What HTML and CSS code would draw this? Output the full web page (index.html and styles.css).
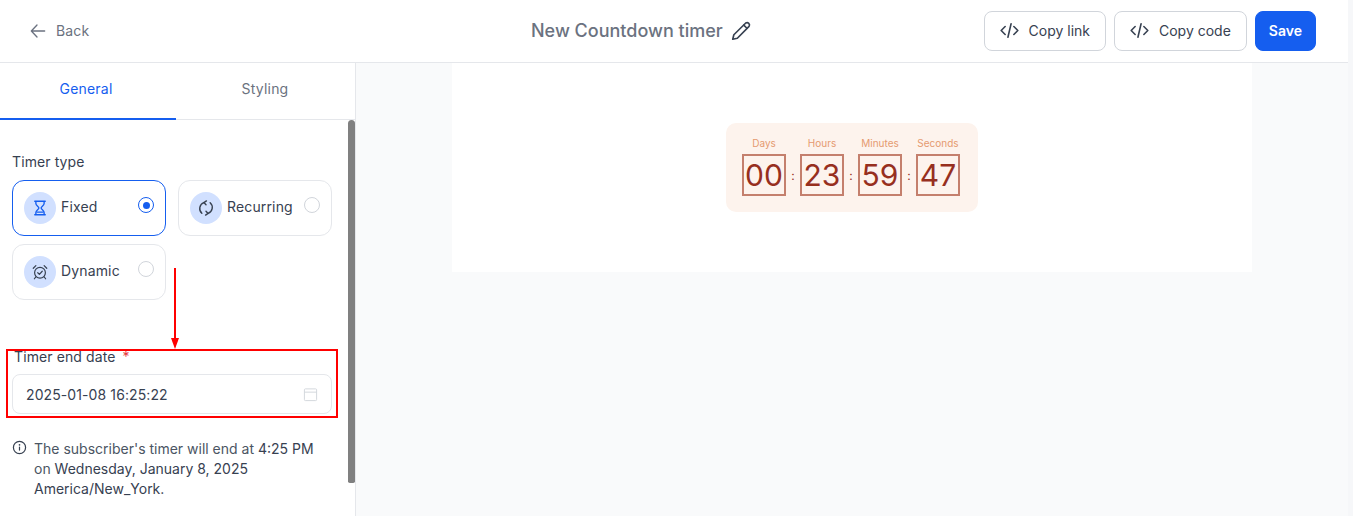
FILE: index.html
```html
<!DOCTYPE html>
<html lang="en">
<head>
  <meta charset="UTF-8" />
  <title>New Countdown timer</title>
  <link rel="stylesheet" href="styles.css">
</head>

<body>
  <div class="app">
    <header class="topbar">
      <a class="back">
        <svg class="back-icon" viewBox="0 0 24 24" fill="none" stroke="currentColor" stroke-width="2" stroke-linecap="round" stroke-linejoin="round"><path d="M10.5 21 2 12l8.500-9M2 12h20"/></svg>
        <span>Back</span>
      </a>
      <div class="title">
        <span>New Countdown timer</span>
        <svg class="pencil" viewBox="0 0 24 24" fill="none" stroke="currentColor" stroke-width="1.8" stroke-linecap="round" stroke-linejoin="round"><path d="M17.200 3.300a2.600 2.600 0 0 1 3.600 3.600L8 19.900 3 21l1.200-4.900z"/><path d="m15 5.500 3.500 3.500"/></svg>
      </div>
      <div class="actions">
        <button class="btn">
          <svg class="code-icon" viewBox="0 0 24 24" fill="none" stroke="currentColor" stroke-width="2" stroke-linecap="round" stroke-linejoin="round"><path d="M6.500 7 1.500 12l5 5M17.500 7l5 5-5 5M14 3.500 10 20.500"/></svg>
          Copy link
        </button>
        <button class="btn">
          <svg class="code-icon" viewBox="0 0 24 24" fill="none" stroke="currentColor" stroke-width="2" stroke-linecap="round" stroke-linejoin="round"><path d="M6.500 7 1.500 12l5 5M17.500 7l5 5-5 5M14 3.500 10 20.500"/></svg>
          Copy code
        </button>
        <button class="btn btn-primary">Save</button>
      </div>
    </header>

    <div class="main">
      <aside class="sidebar">
        <div class="tabs">
          <div class="tab active">General</div>
          <div class="tab">Styling</div>
        </div>

        <div class="panel">
          <div class="field-label">Timer type</div>
          <div class="type-grid">
            <div class="type-card selected">
              <span class="type-icon blue">
                <svg viewBox="0 0 24 24" fill="none" stroke="currentColor" stroke-width="1.800" stroke-linecap="round" stroke-linejoin="round"><path d="M5 3h14M5 21h14M6.500 3v3c0 3 4 4 4 6s-4 3-4 6v3M17.500 3v3c0 3-4 4-4 6s4 3 4 6v3M8.500 17.500h7"/></svg>
              </span>
              <span class="type-name">Fixed</span>
              <span class="radio on"></span>
            </div>
            <div class="type-card">
              <span class="type-icon">
                <svg class="icon-large" viewBox="0 0 24 24" fill="none" stroke="currentColor" stroke-width="1.700" stroke-linecap="round" stroke-linejoin="round"><path d="M9.500 5.500A7.500 7.500 0 0 0 7 18.200M14.500 18.500A7.500 7.500 0 0 0 17 5.800"/><path d="m12.500 3.500-3 2 2.500 2.500M11.500 20.500l3-2-2.500-2.500"/></svg>
              </span>
              <span class="type-name">Recurring</span>
              <span class="radio"></span>
            </div>
            <div class="type-card">
              <span class="type-icon">
                <svg viewBox="0 0 24 24" fill="none" stroke="currentColor" stroke-width="1.600" stroke-linecap="round" stroke-linejoin="round"><circle cx="12" cy="13" r="7.200"/><path d="m9 13 2.200 2.200L15 11M3 7l3.500-3.500M21 7l-3.500-3.500M6.500 18.500 4.500 21M17.500 18.500l2 2.500"/></svg>
              </span>
              <span class="type-name">Dynamic</span>
              <span class="radio"></span>
            </div>
          </div>

          <div class="field-label end-label">Timer end date <span class="req">*</span></div>
          <div class="date-input">
            <span>2025-01-08 16:25:22</span>
            <svg class="cal-icon" viewBox="0 0 16 16" fill="none" stroke="currentColor" stroke-width="1"><rect x="1.500" y="2" width="13" height="12.500" rx="1"/><path d="M1.500 5.500h13"/></svg>
          </div>

          <div class="note">
            <svg class="info-icon" viewBox="0 0 16 16" fill="none" stroke="currentColor" stroke-width="1.300" stroke-linecap="round"><circle cx="8" cy="8" r="6.500"/><path d="M8 7.500v3.200"/><path d="M8 5.100v.1" stroke-width="1.700"/></svg>
            <p>The subscriber's timer will end at <b>4:25 PM</b> on <b>Wednesday, January 8, 2025</b> <b>America/New_York.</b></p>
          </div>
        </div>

        <div class="scroll-thumb"></div>
      </aside>

      <section class="canvas">
        <div class="sheet">
          <div class="timer">
            <div class="unit">
              <div class="unit-label">Days</div>
              <div class="digits">00</div>
            </div>
            <div class="sep">:</div>
            <div class="unit">
              <div class="unit-label">Hours</div>
              <div class="digits">23</div>
            </div>
            <div class="sep">:</div>
            <div class="unit">
              <div class="unit-label">Minutes</div>
              <div class="digits">59</div>
            </div>
            <div class="sep">:</div>
            <div class="unit">
              <div class="unit-label">Seconds</div>
              <div class="digits">47</div>
            </div>
          </div>
        </div>
      </section>
    </div>
  </div>

  <!-- annotation drawn over the screenshot -->
  <div class="mark-line"></div>
  <div class="mark-head"></div>
  <div class="mark-box"></div>
</body>
</html>
```

FILE: styles.css
```css
* {
  box-sizing: border-box;
}

html, body {
  height: 100%;
}

body {
  margin: 0;
  font-family: Inter, "Noto Sans", sans-serif;
  background: #f6f7f9;
  color: #374151;
  overflow: hidden;
}

.app {
  width: 1348px;
  height: 516px;
  display: flex;
  flex-direction: column;
  background: #fff;
}

.topbar {
  flex: 0 0 63px;
  display: flex;
  align-items: center;
  justify-content: space-between;
  padding: 0 32px 1px 30px;
  border-bottom: 1px solid #e5e7eb;
  background: #fff;
  position: relative;
}

.back {
  display: flex;
  align-items: center;
  gap: 10px;
  font-size: 14px;
  letter-spacing: 0.15px;
  color: #6b7280;
}

.back-icon {
  width: 16px;
  height: 16px;
}

.title {
  position: absolute;
  left: 531px;
  top: 0;
  height: 61px;
  display: flex;
  align-items: center;
  gap: 7px;
  font-size: 18px;
  font-weight: 500;
  color: #6b7280;
}

.pencil {
  width: 22px;
  height: 22px;
  color: #374151;
}

.actions {
  display: flex;
  gap: 8px;
}

.btn {
  height: 40px;
  padding: 0 15px;
  display: flex;
  align-items: center;
  gap: 10px;
  background: #fff;
  border: 1px solid #d1d5db;
  border-radius: 8px;
  font-family: inherit;
  font-size: 14px;
  font-weight: 400;
  color: #374151;
}

.btn-primary {
  background: #155eef;
  border-color: #155eef;
  color: #fff;
  font-weight: 600;
  padding: 0 13px;
}

.code-icon {
  width: 19px;
  height: 19px;
}

.main {
  flex: 1;
  display: flex;
  min-height: 0;
}

.sidebar {
  flex: 0 0 356px;
  border-right: 1px solid #e5e7eb;
  background: #fff;
  position: relative;
  overflow: hidden;
}

.tabs {
  display: flex;
  height: 57px;
  border-bottom: 1px solid #e5e7eb;
}

.tab {
  flex: 0 0 176px;
  height: 57px;
  display: flex;
  align-items: center;
  justify-content: center;
  padding-bottom: 6px;
  font-size: 14px;
  font-weight: 400;
  letter-spacing: 0.2px;
  color: #6b7280;
}

.tab + .tab {
  flex: 0 0 178px;
}

.tab.active {
  color: #155eef;
  border-bottom: 2px solid #155eef;
  padding: 0 4px 4px 0;
}

.panel {
  padding: 33px 23px 0 12px;
}

.field-label {
  font-size: 14px;
  font-weight: 400;
  letter-spacing: 0.1px;
  line-height: 17px;
  color: #374151;
}

.type-grid {
  display: grid;
  grid-template-columns: 154px 154px;
  gap: 8px 12px;
  margin-top: 10px;
}

.type-card {
  height: 56px;
  display: flex;
  align-items: center;
  padding: 0 11px;
  border: 1px solid #e5e7eb;
  border-radius: 12px;
  position: relative;
}

.type-card.selected {
  border-color: #155eef;
}

.type-icon {
  flex: 0 0 32px;
  height: 32px;
  border-radius: 50%;
  background: #d1e0ff;
  color: #374151;
  display: flex;
  align-items: center;
  justify-content: center;
}

.type-icon.blue {
  color: #155eef;
}

.type-icon svg {
  width: 18px;
  height: 18px;
}

.type-icon svg.icon-large {
  width: 20px;
  height: 20px;
}

.type-name {
  margin: 0 0 3px 5px;
  font-size: 14px;
  font-weight: 400;
  letter-spacing: 0.15px;
}

.radio {
  position: absolute;
  right: 11px;
  top: 16px;
  width: 16px;
  height: 16px;
  border: 1px solid #d1d5db;
  border-radius: 50%;
  background: #fff;
}

.radio.on {
  border-color: #155eef;
}

.radio.on::after {
  content: "";
  position: absolute;
  left: 3.500px;
  top: 3.500px;
  width: 7px;
  height: 7px;
  border-radius: 50%;
  background: #155eef;
}

.end-label {
  margin-top: 48px;
  padding-left: 2px;
}

.req {
  color: #e5383b;
  margin-left: 3px;
}

.date-input {
  margin-top: 9px;
  width: 320px;
  height: 40px;
  display: flex;
  align-items: center;
  justify-content: space-between;
  padding: 0 13px;
  border: 1px solid #e5e7eb;
  border-radius: 8px;
  font-size: 14px;
  font-weight: 400;
  letter-spacing: 0.1px;
  color: #374151;
}

.cal-icon {
  width: 15px;
  height: 15px;
  color: #d1d5db;
}

.note {
  display: flex;
  gap: 7px;
  margin-top: 25px;
  width: 315px;
}

.info-icon {
  flex: 0 0 15px;
  height: 15px;
  margin-top: 1px;
  color: #374151;
}

.note p {
  margin: 0;
  font-size: 14px;
  line-height: 20px;
  color: #4b5563;
}

.note b {
  font-weight: 400;
  color: #374151;
}

.scroll-thumb {
  position: absolute;
  right: 0;
  top: 57px;
  width: 7px;
  height: 363px;
  border-radius: 4px 4px 2px 2px;
  background: #808080;
}

.canvas {
  flex: 1;
  background: #f9fafb;
  padding-left: 96px;
}

.sheet {
  width: 800px;
  height: 209px;
  background: #fff;
  display: flex;
  justify-content: center;
  padding-top: 60px;
}

.timer {
  width: 252px;
  height: 89px;
  display: flex;
  justify-content: center;
  align-items: flex-end;
  padding: 0 2px 16px 0;
  background: #fdf3ed;
  border-radius: 10px;
}

.unit {
  width: 44px;
}

.unit-label {
  text-align: center;
  font-size: 10px;
  line-height: 12px;
  margin: 0 -6px 5px;
  color: #e59a70;
}

.digits {
  height: 42px;
  display: flex;
  align-items: center;
  justify-content: center;
  border: 2px solid #c47f6d;
  font-size: 30px;
  color: #972f1e;
}

.sep {
  width: 14px;
  height: 42px;
  display: flex;
  align-items: center;
  justify-content: center;
  font-size: 12px;
  color: #972f1e;
}

.mark-box {
  position: absolute;
  left: 6px;
  top: 349px;
  width: 332px;
  height: 69px;
  border: 2px solid #f00;
}

.mark-line {
  position: absolute;
  left: 174px;
  top: 268px;
  width: 1.500px;
  height: 72px;
  background: #f00;
}

.mark-head {
  position: absolute;
  left: 170.500px;
  top: 338px;
  width: 0;
  height: 0;
  border-left: 4px solid transparent;
  border-right: 4px solid transparent;
  border-top: 11px solid #f00;
}
```
